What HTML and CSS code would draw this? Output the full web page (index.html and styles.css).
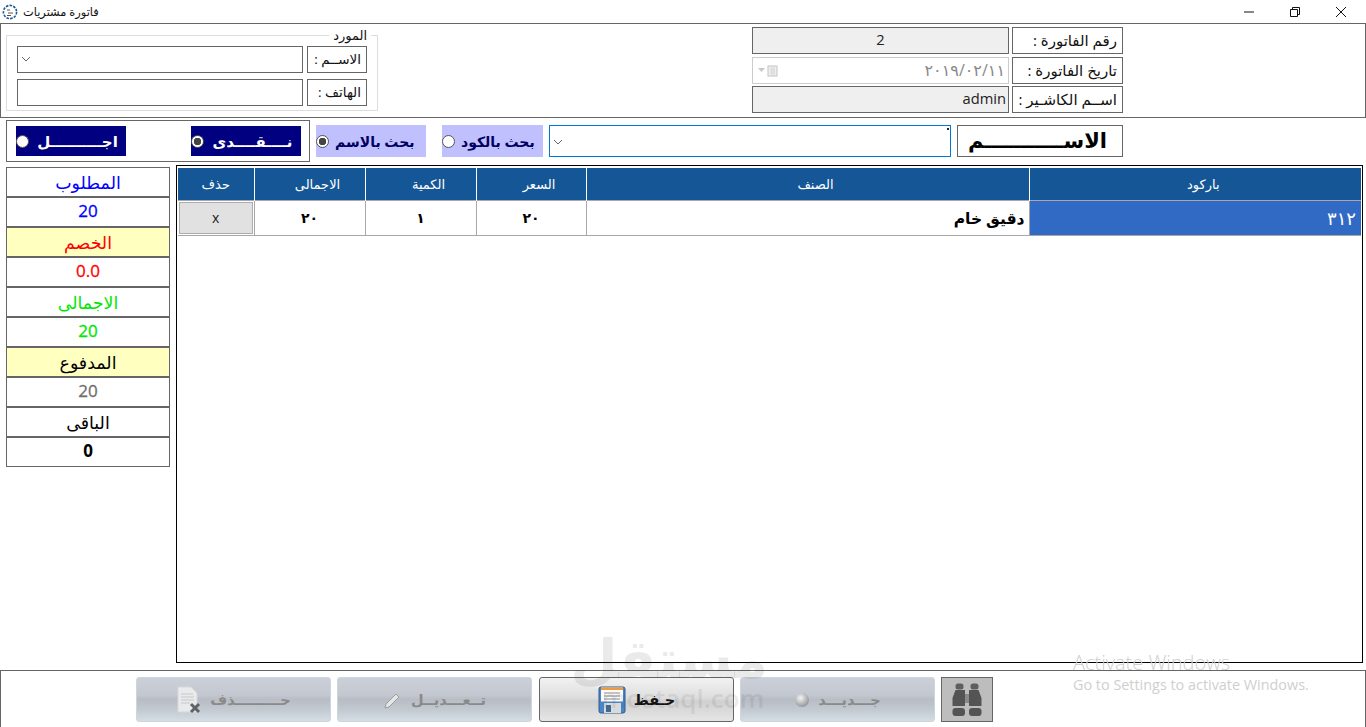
FILE: index.html
```html
<!DOCTYPE html>
<html lang="ar">
<head>
  <meta charset="UTF-8" />
  <meta name="viewport" content="width=device-width, initial-scale=1.0"/>
  <title>فاتورة مشتريات</title>
  <link rel="stylesheet" href="styles.css">
</head>
<body>
  <div class="window">
    <div class="titlebar">
      <div class="app-title">
        <svg class="app-icon" viewBox="0 0 16 16" width="16" height="16">
          <circle cx="8" cy="8" r="6.6" fill="none" stroke="#1f5a96" stroke-width="1.6" stroke-dasharray="2.6 1.2"/>
          <path d="M5 6h3M6 9h5M5 11.5h4" stroke="#555" stroke-width="1" fill="none"/>
        </svg>
        <span dir="rtl">فاتورة مشتريات</span>
      </div>
      <div class="win-buttons">
        <svg viewBox="0 0 12 12" width="12" height="12"><path d="M1 6h10" stroke="#111" fill="none"/></svg>
        <svg viewBox="0 0 12 12" width="12" height="12"><path d="M1.5 3.5h7v7h-7zM3.5 3.5v-2h7v7h-2" stroke="#111" fill="none"/></svg>
        <svg viewBox="0 0 12 12" width="12" height="12"><path d="M1 1l10 10M11 1L1 11" stroke="#111" fill="none"/></svg>
      </div>
    </div>

    <div class="top-panel">
      <fieldset class="supplier">
        <legend dir="rtl">المورد</legend>
        <div class="form-row">
          <div class="field combo">
            <svg class="chev" viewBox="0 0 10 6" width="10" height="6"><path d="M1 1l4 4 4-4" stroke="#666" fill="none"/></svg>
          </div>
          <div class="caption small" dir="rtl">الاســم :</div>
        </div>
        <div class="form-row">
          <div class="field"></div>
          <div class="caption small" dir="rtl">الهاتف :</div>
        </div>
      </fieldset>

      <div class="invoice">
        <div class="inv-row">
          <div class="inv-value readonly center">2</div>
          <div class="caption" dir="rtl">رقم الفاتورة :</div>
        </div>
        <div class="inv-row date-row">
          <div class="inv-value date">
            <span class="date-drop">
              <svg viewBox="0 0 20 12" width="20" height="12">
                <path d="M0 3h7L3.500 7z" fill="#c8c8c8"/>
                <rect x="10" y="1" width="9" height="10" fill="#eee" stroke="#c4c4c4"/>
                <path d="M12 4h5M12 6h5M12 8h5M14 2v8M16 2v8" stroke="#d2d2d2" stroke-width=".6"/>
              </svg>
            </span>
            <span dir="rtl">٢٠١٩/٠٢/١١</span>
          </div>
          <div class="caption" dir="rtl">تاريخ الفاتورة :</div>
        </div>
        <div class="inv-row">
          <div class="inv-value readonly right">admin</div>
          <div class="caption" dir="rtl">اســم الكاشـير :</div>
        </div>
      </div>
    </div>

    <div class="search-row">
      <div class="pay-box">
        <label class="pay-option"><input type="radio" name="pay"><span dir="rtl">اجــــــــــل</span></label>
        <label class="pay-option"><input type="radio" name="pay" checked><span dir="rtl">نــــقــــدى</span></label>
      </div>
      <label class="search-type by-name"><input type="radio" name="by" checked><span dir="rtl">بحث بالاسم</span></label>
      <label class="search-type by-code"><input type="radio" name="by"><span dir="rtl">بحث بالكود</span></label>
      <div class="search-combo">
        <svg class="chev" viewBox="0 0 10 6" width="10" height="6"><path d="M1 1l4 4 4-4" stroke="#666" fill="none"/></svg>
        <span class="tick"></span>
      </div>
      <div class="name-label" dir="rtl">الاســـــــــــم</div>
    </div>

    <div class="content">
      <div class="totals">
        <div class="cell blue" dir="rtl">المطلوب</div>
        <div class="cell blue num">20</div>
        <div class="cell red yellow" dir="rtl">الخصم</div>
        <div class="cell red num">0.0</div>
        <div class="cell green" dir="rtl">الاجمالى</div>
        <div class="cell green num">20</div>
        <div class="cell yellow" dir="rtl">المدفوع</div>
        <div class="cell gray num">20</div>
        <div class="cell" dir="rtl">الباقى</div>
        <div class="cell num strong">0</div>
      </div>

      <div class="grid-panel">
        <table class="grid" dir="rtl">
          <colgroup>
            <col class="c-code"><col class="c-item"><col class="c-price"><col class="c-num"><col class="c-num"><col class="c-del">
          </colgroup>
          <thead>
            <tr>
              <th>باركود</th><th>الصنف</th><th>السعر</th><th>الكمية</th><th>الاجمالى</th><th class="th-del">حذف</th>
            </tr>
          </thead>
          <tbody>
            <tr>
              <td class="code">٣١٢</td>
              <td class="item">دقيق خام</td>
              <td>٢٠</td>
              <td>١</td>
              <td>٢٠</td>
              <td class="del"><button class="del-btn" dir="ltr">x</button></td>
            </tr>
          </tbody>
        </table>
      </div>
    </div>

    <div class="bottom-panel">
      <button class="action off">
        <svg viewBox="0 0 26 28" width="26" height="28">
          <path d="M2 1h13l6 6v19H2z" fill="#e8eaec" stroke="#d6d8da"/>
          <path d="M5 8h12M5 11h13M5 14h13M5 17h9" stroke="#c6c8ca"/>
          <path d="M15 18l8 8M23 18l-8 8" stroke="#5f6266" stroke-width="3"/>
        </svg>
        <span dir="rtl">حـــــــــذف</span>
      </button>
      <button class="action off">
        <svg viewBox="0 0 20 20" width="20" height="20">
          <path d="M3 14L13 4l3 3L6 17l-4 1z" fill="#e4e5e6" stroke="#9a9c9e"/>
        </svg>
        <span dir="rtl">تــعـــديــل</span>
      </button>
      <button class="action save">
        <svg viewBox="0 0 28 28" width="28" height="28">
          <rect x="1" y="1" width="26" height="26" rx="2" fill="#4a86c6" stroke="#2a5a94"/>
          <rect x="3" y="1.500" width="22" height="14" fill="#fbfbfb"/>
          <rect x="3" y="1.500" width="22" height="2.500" fill="#f09a3c"/>
          <path d="M6 7h16M6 10h16M6 13h16" stroke="#888"/>
          <rect x="6" y="17" width="17" height="10" fill="#d8dadc"/>
          <rect x="8" y="19" width="5" height="7" fill="#44688f"/>
        </svg>
        <span dir="rtl">حـفظ</span>
      </button>
      <button class="action off">
        <svg viewBox="0 0 16 16" width="16" height="16">
          <defs><radialGradient id="ball" cx=".4" cy=".35" r=".7"><stop offset="0" stop-color="#f4f4f4"/><stop offset="1" stop-color="#8f9194"/></radialGradient></defs>
          <circle cx="8" cy="8" r="7" fill="url(#ball)"/>
        </svg>
        <span dir="rtl">جـــديـــد</span>
      </button>
      <button class="find-btn" aria-label="بحث">
        <svg viewBox="0 0 34 34" width="34" height="34">
          <rect x="5.500" y="0.500" width="8" height="6" rx="2.500" fill="#5e5e5e"/>
          <rect x="20.500" y="0.500" width="8" height="6" rx="2.500" fill="#5e5e5e"/>
          <path d="M5.500 7H15V23H2.500V15zM19 7H28.500L31.500 15V23H19z" fill="#545454"/>
          <rect x="15" y="11" width="4" height="9" fill="#8a8a8a"/>
          <rect x="2.500" y="25" width="12.500" height="8" rx="3" fill="#545454"/>
          <rect x="19" y="25" width="12.500" height="8" rx="3" fill="#545454"/>
        </svg>
      </button>
    </div>

    <div class="watermark">
      <div class="wm-logo" dir="rtl">مستقل</div>
      <div class="wm-site">mostaql.com</div>
    </div>
    <div class="activate">
      <div class="act-title">Activate Windows</div>
      <div class="act-sub">Go to Settings to activate Windows.</div>
    </div>
  </div>
</body>
</html>
```

FILE: styles.css
```css
* { box-sizing: border-box; margin: 0; padding: 0; }
html, body {
  width: 1366px;
  height: 727px;
  overflow: hidden;
  background: #fff;
}
body {
  font-family: "Open Sans", "DejaVu Sans", sans-serif;
  color: #111;
}
.window {
  position: relative;
  width: 1366px;
  height: 727px;
  display: flex;
  flex-direction: column;
  overflow: hidden;
}

/* title bar */
.titlebar {
  height: 23px;
  display: flex;
  justify-content: space-between;
  align-items: center;
  flex: none;
}
.app-title {
  display: flex;
  align-items: center;
  gap: 5px;
  padding-left: 2px;
  font-size: 11.400px;
}
.win-buttons {
  display: flex;
  gap: 34px;
  padding-right: 19px;
}

/* top panel */
.top-panel {
  flex: none;
  width: 1366px;
  height: 95px;
  border: 1px solid #666;
  display: flex;
  padding-left: 5px;
  position: relative;
}
.supplier {
  width: 372px;
  height: 82px;
  margin-top: 5px;
  border: 1px solid #ddd;
  padding: 5px 10px 0 10px;
  display: flex;
  flex-direction: column;
  gap: 6px;
}
.supplier legend {
  margin-left: auto;
  margin-right: -4px;
  padding: 0 4px;
  font-size: 13px;
  line-height: 12px;
}
.form-row {
  display: flex;
  gap: 4px;
  height: 27px;
}
.field {
  width: 286px;
  height: 27px;
  border: 1px solid #666;
  background: #fff;
  position: relative;
}
.combo .chev {
  position: absolute;
  left: 3px;
  top: 9px;
}
.caption {
  width: 111px;
  height: 27px;
  border: 1px solid #666;
  font-size: 15px;
  line-height: 25px;
  padding-right: 5px;
  text-align: right;
  white-space: nowrap;
}
.caption.small {
  width: 60px;
  font-size: 13.500px;
}
.invoice {
  margin-left: 374px;
  padding-top: 3px;
  display: flex;
  flex-direction: column;
  gap: 2px;
}
.inv-row {
  display: flex;
  gap: 3px;
  height: 27px;
}
.date-row { margin-top: 1px; }
.inv-value {
  width: 257px;
  height: 27px;
  border: 1px solid #666;
  font-size: 14.700px;
  line-height: 23px;
  color: #222;
}
.readonly { background: #efefef; }
.center { text-align: center; }
.right { text-align: right; padding-right: 2px; }
.date {
  border-color: #ccc;
  display: flex;
  justify-content: space-between;
  align-items: center;
  padding: 0 3px 0 5px;
  color: #888;
  font-size: 16px;
}
.date-drop { display: flex; }

/* search row */
.search-row {
  flex: none;
  display: flex;
  align-items: flex-start;
  height: 42px;
  margin-top: 2px;
  padding-left: 6px;
}
.pay-box {
  width: 304px;
  height: 42px;
  border: 1px solid #666;
  display: flex;
  justify-content: space-between;
  padding: 5px 8px 5px 9px;
}
.pay-option {
  width: 110px;
  height: 30px;
  background: #000080;
  color: #fff;
  display: flex;
  align-items: center;
  font-size: 15px;
  font-weight: bold;
  white-space: nowrap;
  overflow: hidden;
}
.pay-option span {
  flex: 1;
  text-align: center;
}
input[type="radio"] {
  appearance: none;
  flex: none;
  width: 13px;
  height: 13px;
  border: 1px solid #555;
  border-radius: 50%;
  background: #fff;
}
input[type="radio"]:checked {
  background: radial-gradient(circle, #444 0 3.500px, #fff 4px);
}
.search-type {
  height: 32px;
  background: #c0c0ff;
  color: #000060;
  display: flex;
  align-items: center;
  gap: 6px;
  margin-top: 5px;
  font-size: 14px;
  font-weight: bold;
  white-space: nowrap;
  overflow: hidden;
}
.by-name { width: 110px; margin-left: 6px; }
.by-code { width: 101px; margin-left: 16px; }
.search-combo {
  width: 402px;
  height: 32px;
  margin: 5px 0 0 6px;
  border: 1px solid #0078d7;
  background: #fff;
  position: relative;
}
.search-combo .chev {
  position: absolute;
  left: 3px;
  top: 13px;
}
.tick {
  position: absolute;
  right: 1px;
  top: 2px;
  width: 2px;
  height: 2px;
  background: #222;
}
.name-label {
  width: 166px;
  height: 32px;
  margin: 5px 0 0 6px;
  border: 1px solid #666;
  font-size: 21px;
  font-weight: bold;
  line-height: 28px;
  padding-right: 15px;
  color: #000;
  white-space: nowrap;
  overflow: hidden;
}

/* totals + grid */
.content {
  flex: none;
  display: flex;
  align-items: flex-start;
  height: 505px;
  margin-top: 3px;
  padding-left: 6px;
}
.totals {
  width: 164px;
  margin-top: 2px;
  margin-right: 6px;
  display: flex;
  flex-direction: column;
}
.cell {
  height: 30px;
  border: 1px solid #666;
  text-align: center;
  font-size: 17.400px;
  line-height: 29px;
  background: #fff;
  color: #000;
}
.cell.num {
  font-size: 17px;
  line-height: 26px;
  -webkit-text-stroke: 0.3px;
}
.cell.strong {
  font-weight: bold;
  -webkit-text-stroke: 0;
}
.cell.blue { color: #0000ff; }
.cell.red { color: #ff0000; }
.cell.green { color: #00e800; }
.cell.gray { color: #6e6e6e; }
.cell.yellow { background: #ffffc0; }
.grid-panel {
  width: 1187px;
  height: 498px;
  border: 1px solid #000;
  padding: 2px 1px 0 1px;
}
.grid {
  width: 1183px;
  border-collapse: collapse;
  table-layout: fixed;
}
.c-code { width: 332px; }
.c-item { width: 443px; }
.c-price { width: 110px; }
.c-num { width: 111px; }
.c-del { width: 76px; }
.grid th {
  height: 32px;
  background: #155796;
  color: #fff;
  font-size: 13px;
  font-weight: normal;
  padding-left: 16px;
  border-right: 1px solid #fff;
  border-left: 1px solid #fff;
}
.grid th:first-child { border-right: none; }
.grid th:last-child { border-left: none; }
.grid th.th-del { padding-left: 0; }
.grid td {
  height: 35px;
  border: 1px solid #a8a8a8;
  text-align: center;
  font-size: 14px;
  font-weight: bold;
  color: #000;
}
.grid td.code {
  background: #316ac5;
  color: #fff;
  font-weight: normal;
  font-size: 18px;
  text-align: right;
  padding-right: 5px;
  border-right: none;
}
.grid td.item {
  text-align: right;
  padding-right: 4px;
  font-size: 15.500px;
}
.grid td.del {
  padding: 1px;
  border-left: none;
}
.del-btn {
  display: block;
  width: 100%;
  height: 32px;
  background: #e1e1e1;
  border: 1px solid #adadad;
  font-family: "Open Sans", sans-serif;
  font-size: 14px;
  color: #222;
}

/* bottom buttons */
.bottom-panel {
  flex: none;
  width: 1366px;
  height: 60px;
  border: 1px solid #666;
  border-bottom: none;
  padding: 6px 0 0 135px;
  display: flex;
  gap: 6px;
}
.action {
  width: 195px;
  height: 45px;
  border-radius: 3px;
  display: flex;
  align-items: center;
  justify-content: center;
  gap: 8px;
  font-family: "DejaVu Sans", sans-serif;
  font-size: 14.500px;
  font-weight: bold;
  white-space: nowrap;
}
.action.off {
  border: 1px solid #cdd6dd;
  background: linear-gradient(#ccd1d9 0%, #c2c7d0 40%, #b7bcc5 50%, #c4cad1 75%, #d5dee5 100%);
  color: #8a8a8a;
}
.action.save {
  margin-left: 1px;
  border: 1px solid #666;
  background: linear-gradient(#f2f2f2 0%, #dedede 45%, #d0d0d0 55%, #e6e6e6 100%);
  color: #111;
}
.find-btn {
  width: 52px;
  height: 45px;
  border: 1px solid #666;
  background: #bdbdbd;
  display: flex;
  align-items: center;
  justify-content: center;
}

/* overlays: watermark and activation notice */
.watermark {
  position: absolute;
  left: 598px;
  top: 622px;
  width: 170px;
  text-align: center;
  color: rgba(60, 60, 60, 0.11);
  pointer-events: none;
}
.wm-logo {
  font-family: "DejaVu Sans", sans-serif;
  font-size: 54px;
  font-weight: bold;
  line-height: 76px;
}
.wm-site {
  font-family: "Open Sans", sans-serif;
  font-size: 26px;
  font-weight: 600;
  line-height: 20px;
  margin-top: -10px;
}
.activate {
  position: absolute;
  left: 1073px;
  top: 650px;
  color: #cfcfcf;
  font-family: "Open Sans", sans-serif;
  pointer-events: none;
  white-space: nowrap;
}
.act-title {
  font-size: 20px;
  font-weight: 300;
  line-height: 25px;
}
.act-sub {
  font-size: 14.400px;
  line-height: 20px;
}
```
